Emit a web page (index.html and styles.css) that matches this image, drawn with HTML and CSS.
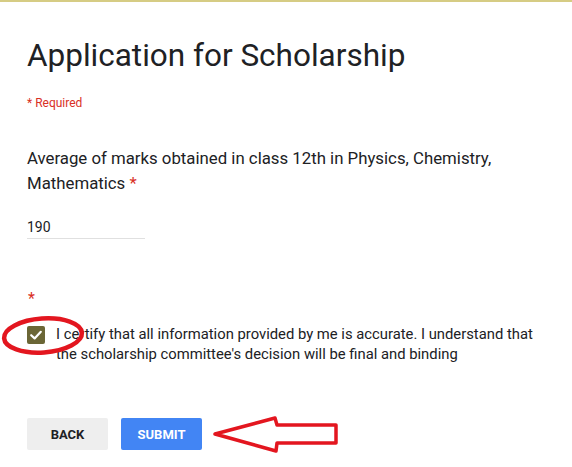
FILE: index.html
```html
<!DOCTYPE html>
<html>
<head>
<meta charset="utf-8">
<link rel="stylesheet" href="styles.css">
</head>
<body>
<div class="page">
  <div class="topline"></div>
  <div class="form">
    <h1 class="title">Application for Scholarship</h1>
    <div class="required">* Required</div>
    <div class="question">
      <div class="q-label">Average of marks obtained in class 12th in Physics, Chemistry, Mathematics <span class="star">*</span></div>
      <div class="answer">190</div>
    </div>
    <div class="question2">
      <div class="star star-alone">*</div>
      <div class="check-row">
        <span class="checkbox">
          <svg width="18" height="18" viewBox="0 0 18 18"><path d="M4.2 9.2 L7.6 12.4 L13.8 5.8" fill="none" stroke="#fff" stroke-width="2.2" stroke-linecap="round" stroke-linejoin="round"/></svg>
        </span>
        <span class="check-text">I certify that all information provided by me is accurate. I understand that the scholarship committee's decision will be final and binding</span>
      </div>
    </div>
    <div class="buttons">
      <button class="btn btn-back">BACK</button>
      <button class="btn btn-submit">SUBMIT</button>
    </div>
  </div>
  <svg class="annot" width="572" height="467" viewBox="0 0 572 467">
    <ellipse cx="43" cy="335.5" rx="39" ry="17" fill="none" stroke="#e3161f" stroke-width="4.5" transform="rotate(-4 43 335.5)"/>
    <path d="M215 434 L275 418 L277 425 L336 425 L336 443 L277 443 L276 451 Z" fill="none" stroke="#e3161f" stroke-width="3.5" stroke-linejoin="round"/>
  </svg>
</div>
</body>
</html>
```
FILE: styles.css
```css
html, body {
  margin: 0;
  padding: 0;
  background: #fff;
}
.page {
  position: relative;
  width: 572px;
  height: 467px;
  overflow: hidden;
  font-family: Roboto, "Liberation Sans", sans-serif;
  color: #202124;
}
.topline {
  height: 2px;
  background: #d6cc84;
}
.form {
  padding: 0 27px;
}
.title {
  margin: 35px 0 0;
  font-size: 31.5px;
  font-weight: 400;
  line-height: 38px;
  color: #202124;
}
.required {
  margin-top: 20px;
  font-size: 12px;
  line-height: 16px;
  color: #d93025;
}
.question {
  margin-top: 35px;
}
.q-label {
  font-size: 16.8px;
  line-height: 25px;
  color: #202124;
}
.star {
  color: #d93025;
}
.answer {
  margin-top: 21px;
  width: 118px;
  font-size: 14px;
  line-height: 20px;
  padding-bottom: 1px;
  border-bottom: 1px solid #e0e0e0;
}
.question2 {
  margin-top: 50px;
}
.star-alone {
  font-size: 16px;
  line-height: 20px;
  padding-left: 1px;
}
.check-row {
  display: flex;
  align-items: flex-start;
  gap: 11px;
  margin-top: 15px;
}
.checkbox {
  flex: none;
  width: 18px;
  height: 18px;
  border-radius: 2px;
  background: #6b6636;
  margin-top: 2px;
}
.checkbox svg {
  display: block;
}
.check-text {
  font-size: 14.8px;
  line-height: 20px;
  color: #202124;
}
.buttons {
  display: flex;
  gap: 13px;
  margin-top: 54px;
}
.btn {
  border: none;
  border-radius: 2px;
  width: 81px;
  height: 32px;
  font-family: Roboto, "Liberation Sans", sans-serif;
  font-size: 13px;
  font-weight: 700;
  padding: 0;
}
.btn-back {
  background: #eeeeee;
  color: #202124;
}
.btn-submit {
  background: #4285f4;
  color: #fff;
}
.annot {
  position: absolute;
  left: 0;
  top: 0;
  pointer-events: none;
}
```
